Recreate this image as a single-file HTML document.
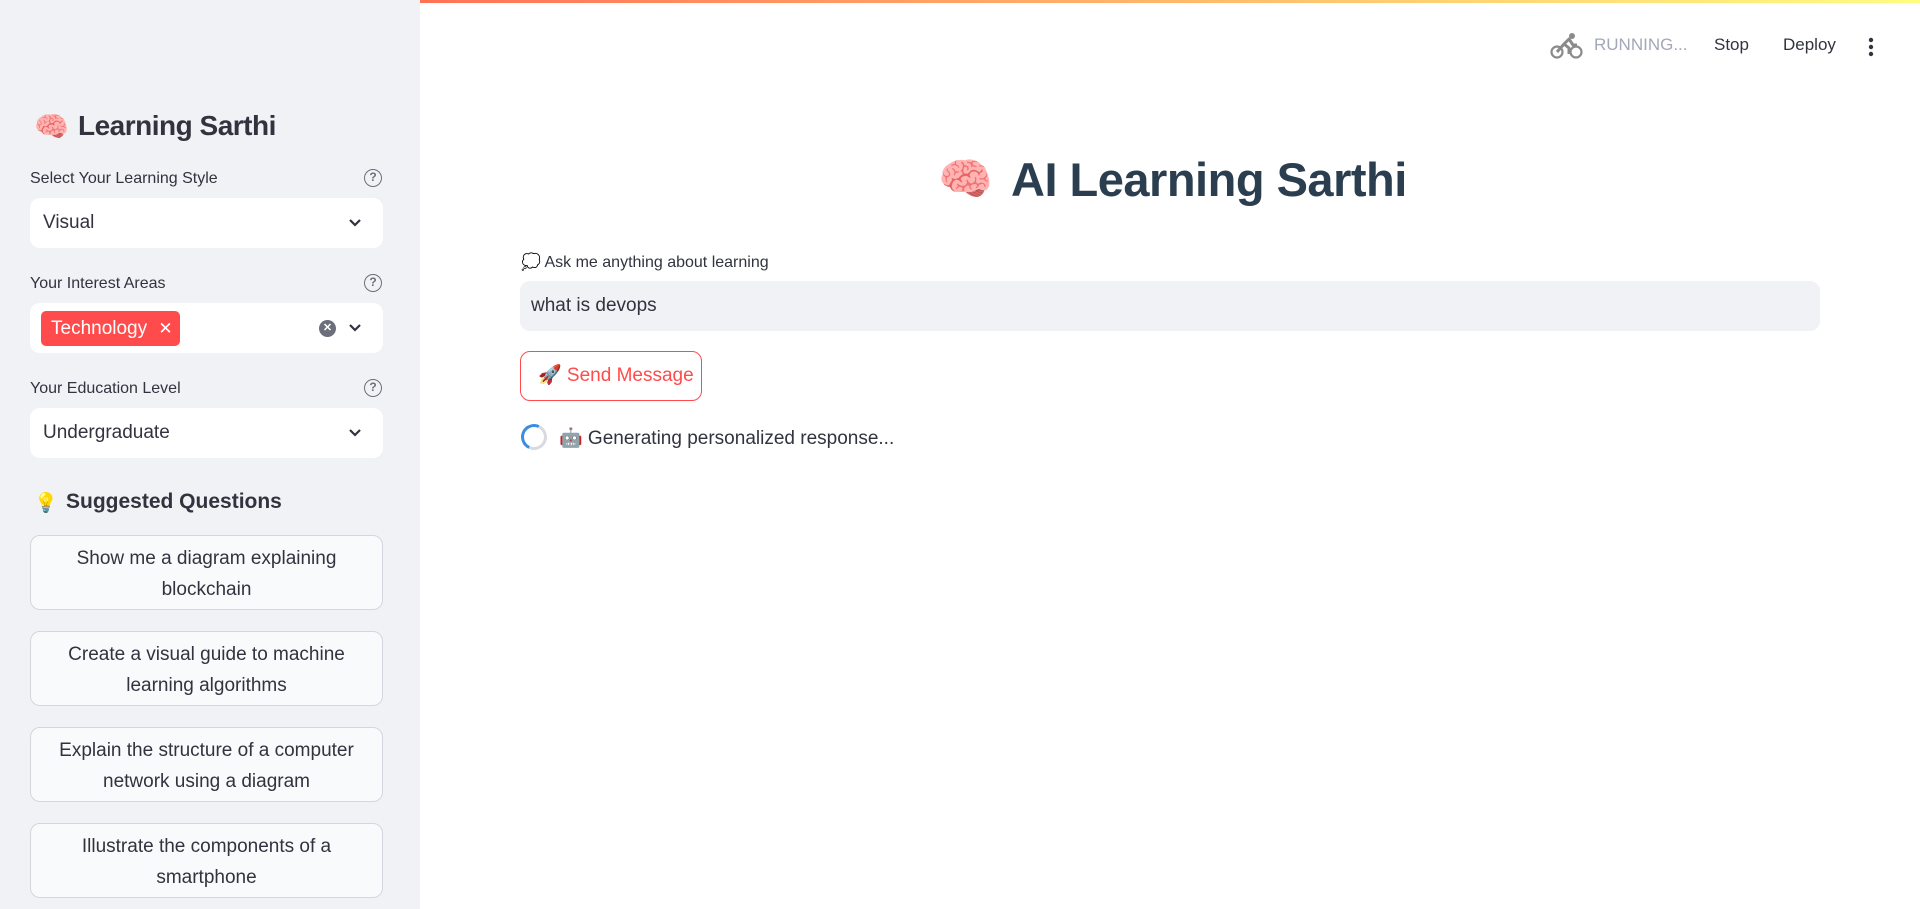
<!DOCTYPE html>
<html><head><meta charset="utf-8"><style>
*{box-sizing:border-box;margin:0;padding:0}
body{width:1920px;height:909px;overflow:hidden;background:#fff;font-family:"Source Sans Pro","Liberation Sans","Noto Sans CJK JP",sans-serif;color:#31333f;position:relative}
.topbar{position:absolute;left:0;top:0;width:1920px;height:3px;background:linear-gradient(90deg,#ff4b4b,#fffd80)}
.side{position:absolute;left:0;top:0;width:420px;height:909px;background:#f0f2f6}
.abs{position:absolute}
.lbl{position:absolute;left:30px;font-size:16px;color:#31333f}
.help{position:absolute;left:364px;width:18px;height:18px;border:1.6px solid #6b6f7a;border-radius:50%;font-size:12px;font-weight:bold;color:#6b6f7a;text-align:center;line-height:15px}
.sel{position:absolute;left:30px;width:353px;height:50px;background:#fff;border-radius:10px}
.sel span{position:absolute;left:13px;top:14px;font-size:19px}
.chev{position:absolute;left:318px;width:14px;height:14px}
.q{position:absolute;left:30px;width:353px;height:75px;background:#f9fafb;border:1px solid #d3d6dd;border-radius:10px;text-align:center;font-size:19px;line-height:31px;padding-top:7px;color:#31333f}
</style></head><body>
<div class="topbar"></div>
<div class="side"></div>
<div class="abs" style="left:34px;top:110px;font-size:28px">🧠</div>
<div class="abs" style="left:78px;top:110px;font-size:28px;font-weight:bold;color:#31333f;letter-spacing:-0.5px">Learning Sarthi</div>

<div class="lbl" style="top:170px">Select Your Learning Style</div><div class="help" style="top:169px">?</div>
<div class="sel" style="top:198px"><span>Visual</span><svg class="chev" style="top:18px" viewBox="0 0 14 14"><path d="M2 4l5 5 5-5" fill="none" stroke="#31333f" stroke-width="2.2"/></svg></div>

<div class="lbl" style="top:275px">Your Interest Areas</div><div class="help" style="top:274px">?</div>
<div class="sel" style="top:303px"><div class="abs" style="left:11px;top:8px;width:139px;height:35px;background:#ff4b4b;border-radius:5px;color:#fff;font-size:19px;line-height:35px;padding-left:10px">Technology <span style="position:static;font-size:17px;margin-left:6px">✕</span></div>
<div class="abs" style="left:289px;top:17px;width:17px;height:17px;border-radius:50%;background:#6b6f7a;color:#fff;font-size:11px;text-align:center;line-height:17px;font-weight:bold">✕</div>
<svg class="chev" style="top:18px" viewBox="0 0 14 14"><path d="M2 4l5 5 5-5" fill="none" stroke="#31333f" stroke-width="2.2"/></svg></div>

<div class="lbl" style="top:380px">Your Education Level</div><div class="help" style="top:379px">?</div>
<div class="sel" style="top:408px"><span>Undergraduate</span><svg class="chev" style="top:18px" viewBox="0 0 14 14"><path d="M2 4l5 5 5-5" fill="none" stroke="#31333f" stroke-width="2.2"/></svg></div>

<div class="abs" style="left:34px;top:491px;font-size:19px">💡</div>
<div class="abs" style="left:66px;top:490px;font-size:21px;font-weight:bold;color:#31333f">Suggested Questions</div>

<div class="q" style="top:535px">Show me a diagram explaining<br>blockchain</div>
<div class="q" style="top:631px">Create a visual guide to machine<br>learning algorithms</div>
<div class="q" style="top:727px">Explain the structure of a computer<br>network using a diagram</div>
<div class="q" style="top:823px">Illustrate the components of a<br>smartphone</div>

<!-- header -->
<svg class="abs" style="left:1550px;top:32px" width="34" height="28" viewBox="0 0 34 28"><circle cx="7" cy="20" r="5.5" fill="none" stroke="#8b8b8b" stroke-width="2.2"/><circle cx="26" cy="20" r="5.5" fill="none" stroke="#8b8b8b" stroke-width="2.2"/><circle cx="22" cy="4" r="3" fill="#8b8b8b"/><path d="M7 20l7-8 5 4v6M14 12l5-5 4 6h4" fill="none" stroke="#8b8b8b" stroke-width="3" stroke-linejoin="round"/></svg>
<div class="abs" style="left:1594px;top:35px;font-size:17px;color:#a3a8b8;font-family:'Liberation Sans',sans-serif">RUNNING...</div>
<div class="abs" style="left:1714px;top:35px;font-size:17px;color:#31333f;font-family:'Liberation Sans',sans-serif">Stop</div>
<div class="abs" style="left:1783px;top:35px;font-size:17px;color:#31333f;font-family:'Liberation Sans',sans-serif">Deploy</div>
<svg class="abs" style="left:1866px;top:36px" width="10" height="22"><circle cx="5" cy="4" r="2.2" fill="#31333f"/><circle cx="5" cy="11" r="2.2" fill="#31333f"/><circle cx="5" cy="18" r="2.2" fill="#31333f"/></svg>

<!-- main -->
<div class="abs" style="left:938px;top:153px;font-size:44px">🧠</div>
<div class="abs" style="left:1011px;top:152px;font-size:47px;font-weight:bold;color:#2b3e50;letter-spacing:-0.5px">AI Learning Sarthi</div>
<div class="abs" style="left:521px;top:252px;font-size:16px;color:#31333f">💭 Ask me anything about learning</div>
<div class="abs" style="left:520px;top:281px;width:1300px;height:50px;background:#f0f2f6;border-radius:10px"><span class="abs" style="left:11px;top:14px;font-size:19px">what is devops</span></div>
<div class="abs" style="left:520px;top:351px;width:182px;height:50px;border:1px solid #ff4b4b;border-radius:10px;color:#ff4b4b;font-size:19px;line-height:48px;padding-left:17px">🚀 Send Message</div>
<div class="abs" style="left:521px;top:424px;width:26px;height:26px;border-radius:50%;border:3px solid #d8dadf;border-left-color:#3b8de0;border-top-color:#3b8de0;transform:rotate(-20deg)"></div>
<div class="abs" style="left:559px;top:426px;font-size:19px;color:#31333f">🤖 Generating personalized response...</div>
</body></html>
